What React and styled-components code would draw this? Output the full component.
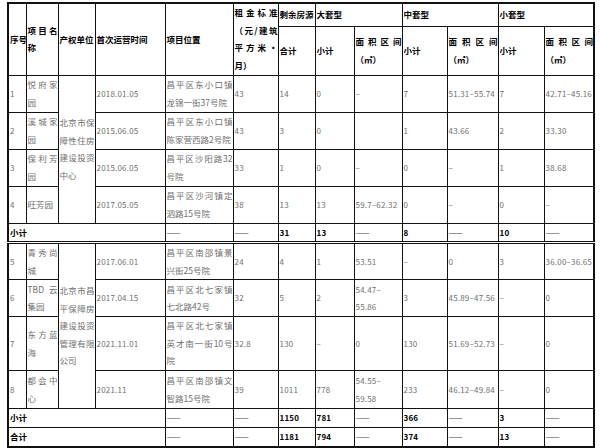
import React from 'react'
import styled, { createGlobalStyle } from 'styled-components'

const GlobalStyle = createGlobalStyle`
  html, body {
    margin: 0;
    background: #ffffff;
  }
`

const colWidths = [18, 32, 37, 70, 68, 45, 37, 39, 48, 45, 51, 46, 50]

const Page = styled.div`
  padding: 2px 0 0 7px;
  width: 600px;
  height: 448px;
  box-sizing: border-box;
  background: #ffffff;
`

const Table = styled.table`
  border-collapse: collapse;
  table-layout: fixed;
  width: 586px;
  border: 2px solid #111;
  font-family: "Noto Sans CJK SC", "Liberation Sans", sans-serif;
  font-size: 8.5px;
  line-height: 17.5px;
`

const Row = styled.tr`
  height: ${p => p.$h}px;
`

const Head = styled.th`
  border: 1px solid #111;
  padding: 0 0 0 1px;
  vertical-align: middle;
  text-align: left;
  color: #000;
  font-weight: 700;
  white-space: nowrap;
`

const Cell = styled.td`
  border: 1px solid #111;
  border-bottom-width: ${p => (p.$double ? '3px' : '1px')};
  border-bottom-style: ${p => (p.$double ? 'double' : 'solid')};
  padding: 0 0 0 1px;
  vertical-align: middle;
  text-align: left;
  color: ${p => (p.$strong ? '#000' : '#6f6f6f')};
  font-weight: ${p => (p.$strong ? 700 : 400)};
  font-size: ${p => (p.$num ? '8px' : '8.5px')};
  letter-spacing: ${p => (p.$num ? '0.2px' : '0')};
  white-space: nowrap;
`

const Line = styled.span`
  display: block;
  white-space: normal;
  text-align: justify;
  text-align-last: justify;
`

const LastLine = styled.span`
  display: block;
  white-space: nowrap;
`

const Dash = styled.span`
  color: #444;
  font-weight: 400;
`

function Lines({ lines }) {
  if (!Array.isArray(lines)) return lines
  return lines.map((l, i) =>
    i < lines.length - 1 ? <Line key={i}>{l}</Line> : <LastLine key={i}>{l}</LastLine>
  )
}

const groupA = {
  owner: ['北京市保', '障性住房', '建设投资', '中心'],
  rows: [
    { h: 37, no: '1', name: ['悦府家', '园'], date: '2018.01.05', loc: ['昌平区东小口镇', '龙锦一街37号院'], rent: '43', total: '14', bigN: '0', bigA: '–', midN: '7', midA: '51.31–55.74', smN: '7', smA: '42.71–45.16' },
    { h: 37, no: '2', name: ['溪城家', '园'], date: '2015.06.05', loc: ['昌平区东小口镇', '陈家营西路2号院'], rent: '43', total: '3', bigN: '0', bigA: '', midN: '1', midA: '43.66', smN: '2', smA: '33.30' },
    { h: 37, no: '3', name: ['保利芳', '园'], date: '2015.06.05', loc: ['昌平区沙阳路32', '号院'], rent: '33', total: '1', bigN: '0', bigA: '–', midN: '0', midA: '–', smN: '1', smA: '38.68' },
    { h: 37, no: '4', name: '旺芳园', date: '2017.05.05', loc: ['昌平区沙河镇定', '泗路15号院'], rent: '38', total: '13', bigN: '13', bigA: '59.7–62.32', midN: '0', midA: '–', smN: '0', smA: '–' },
  ],
  sum: { h: 19, total: '31', bigN: '13', midN: '8', smN: '10' },
}

const groupB = {
  owner: ['北京市昌', '平保障房', '建设投资', '管理有限', '公司'],
  rows: [
    { h: 36, no: '5', name: ['青秀尚', '城'], date: '2017.06.01', loc: ['昌平区南邵镇景', '兴街25号院'], rent: '24', total: '4', bigN: '1', bigA: '53.51', midN: '–', midA: '0', smN: '3', smA: '36.00–36.65' },
    { h: 37, no: '6', name: ['TBD 云', '集园'], date: '2017.04.15', loc: ['昌平区北七家镇', '七北路42号'], rent: '32', total: '5', bigN: '2', bigA: ['54.47–', '55.86'], midN: '3', midA: '45.89–47.56', smN: '–', smA: '0' },
    { h: 54, no: '7', name: ['东方蓝', '海'], date: '2021.11.01', loc: ['昌平区北七家镇', '英才南一街10号', '院'], rent: '32.8', total: '130', bigN: '–', bigA: '0', midN: '130', midA: '51.69–52.73', smN: '–', smA: '0' },
    { h: 38, no: '8', name: ['都会中', '心'], date: '2021.11', loc: ['昌平区南邵镇文', '智路15号院'], rent: '39', total: '1011', bigN: '778', bigA: ['54.55–', '59.58'], midN: '233', midA: '46.12–49.84', smN: '–', smA: '0' },
  ],
  sum: { h: 19, total: '1150', bigN: '781', midN: '366', smN: '3' },
}

const grand = { h: 19, label: '合计', total: '1181', bigN: '794', midN: '374', smN: '13' }

function SumRow({ label, data, double }) {
  return (
    <Row $h={data.h}>
      <Cell colSpan={4} $strong $double={double}>{label}</Cell>
      <Cell $double={double}><Dash>——</Dash></Cell>
      <Cell $double={double}><Dash>——</Dash></Cell>
      <Cell $strong $num $double={double}>{data.total}</Cell>
      <Cell $strong $num $double={double}>{data.bigN}</Cell>
      <Cell $double={double}><Dash>——</Dash></Cell>
      <Cell $strong $num $double={double}>{data.midN}</Cell>
      <Cell $double={double}><Dash>——</Dash></Cell>
      <Cell $strong $num $double={double}>{data.smN}</Cell>
      <Cell $double={double}><Dash>——</Dash></Cell>
    </Row>
  )
}

function Group({ group }) {
  return (
    <>
      {group.rows.map((r, i) => (
        <Row key={r.no} $h={r.h}>
          <Cell $num>{r.no}</Cell>
          <Cell><Lines lines={r.name} /></Cell>
          {i === 0 && (
            <Cell rowSpan={group.rows.length}><Lines lines={group.owner} /></Cell>
          )}
          <Cell $num>{r.date}</Cell>
          <Cell><Lines lines={r.loc} /></Cell>
          <Cell $num>{r.rent}</Cell>
          <Cell $num>{r.total}</Cell>
          <Cell $num>{r.bigN}</Cell>
          <Cell $num><Lines lines={r.bigA} /></Cell>
          <Cell $num>{r.midN}</Cell>
          <Cell $num>{r.midA}</Cell>
          <Cell $num>{r.smN}</Cell>
          <Cell $num>{r.smA}</Cell>
        </Row>
      ))}
    </>
  )
}

export default function App() {
  return (
    <Page>
      <GlobalStyle />
      <Table>
        <colgroup>
          {colWidths.map((w, i) => <col key={i} style={{ width: w }} />)}
        </colgroup>
        <thead>
          <Row $h={23}>
            <Head rowSpan={2}>序号</Head>
            <Head rowSpan={2}><Lines lines={['项目名', '称']} /></Head>
            <Head rowSpan={2}>产权单位</Head>
            <Head rowSpan={2}>首次运营时间</Head>
            <Head rowSpan={2}>项目位置</Head>
            <Head rowSpan={2}><Lines lines={['租金标准', '（元/建筑', '平方米・', '月）']} /></Head>
            <Head>剩余房源</Head>
            <Head colSpan={2}>大套型</Head>
            <Head colSpan={2}>中套型</Head>
            <Head colSpan={2}>小套型</Head>
          </Row>
          <Row $h={49}>
            <Head>合计</Head>
            <Head>小计</Head>
            <Head><Lines lines={['面积区间', '（㎡）']} /></Head>
            <Head>小计</Head>
            <Head><Lines lines={['面积区间', '（㎡）']} /></Head>
            <Head>小计</Head>
            <Head><Lines lines={['面积区间', '（㎡）']} /></Head>
          </Row>
        </thead>
        <tbody>
          <Group group={groupA} />
          <SumRow label="小计" data={groupA.sum} double />
          <Group group={groupB} />
          <SumRow label="小计" data={groupB.sum} />
          <SumRow label={grand.label} data={grand} />
        </tbody>
      </Table>
    </Page>
  )
}
